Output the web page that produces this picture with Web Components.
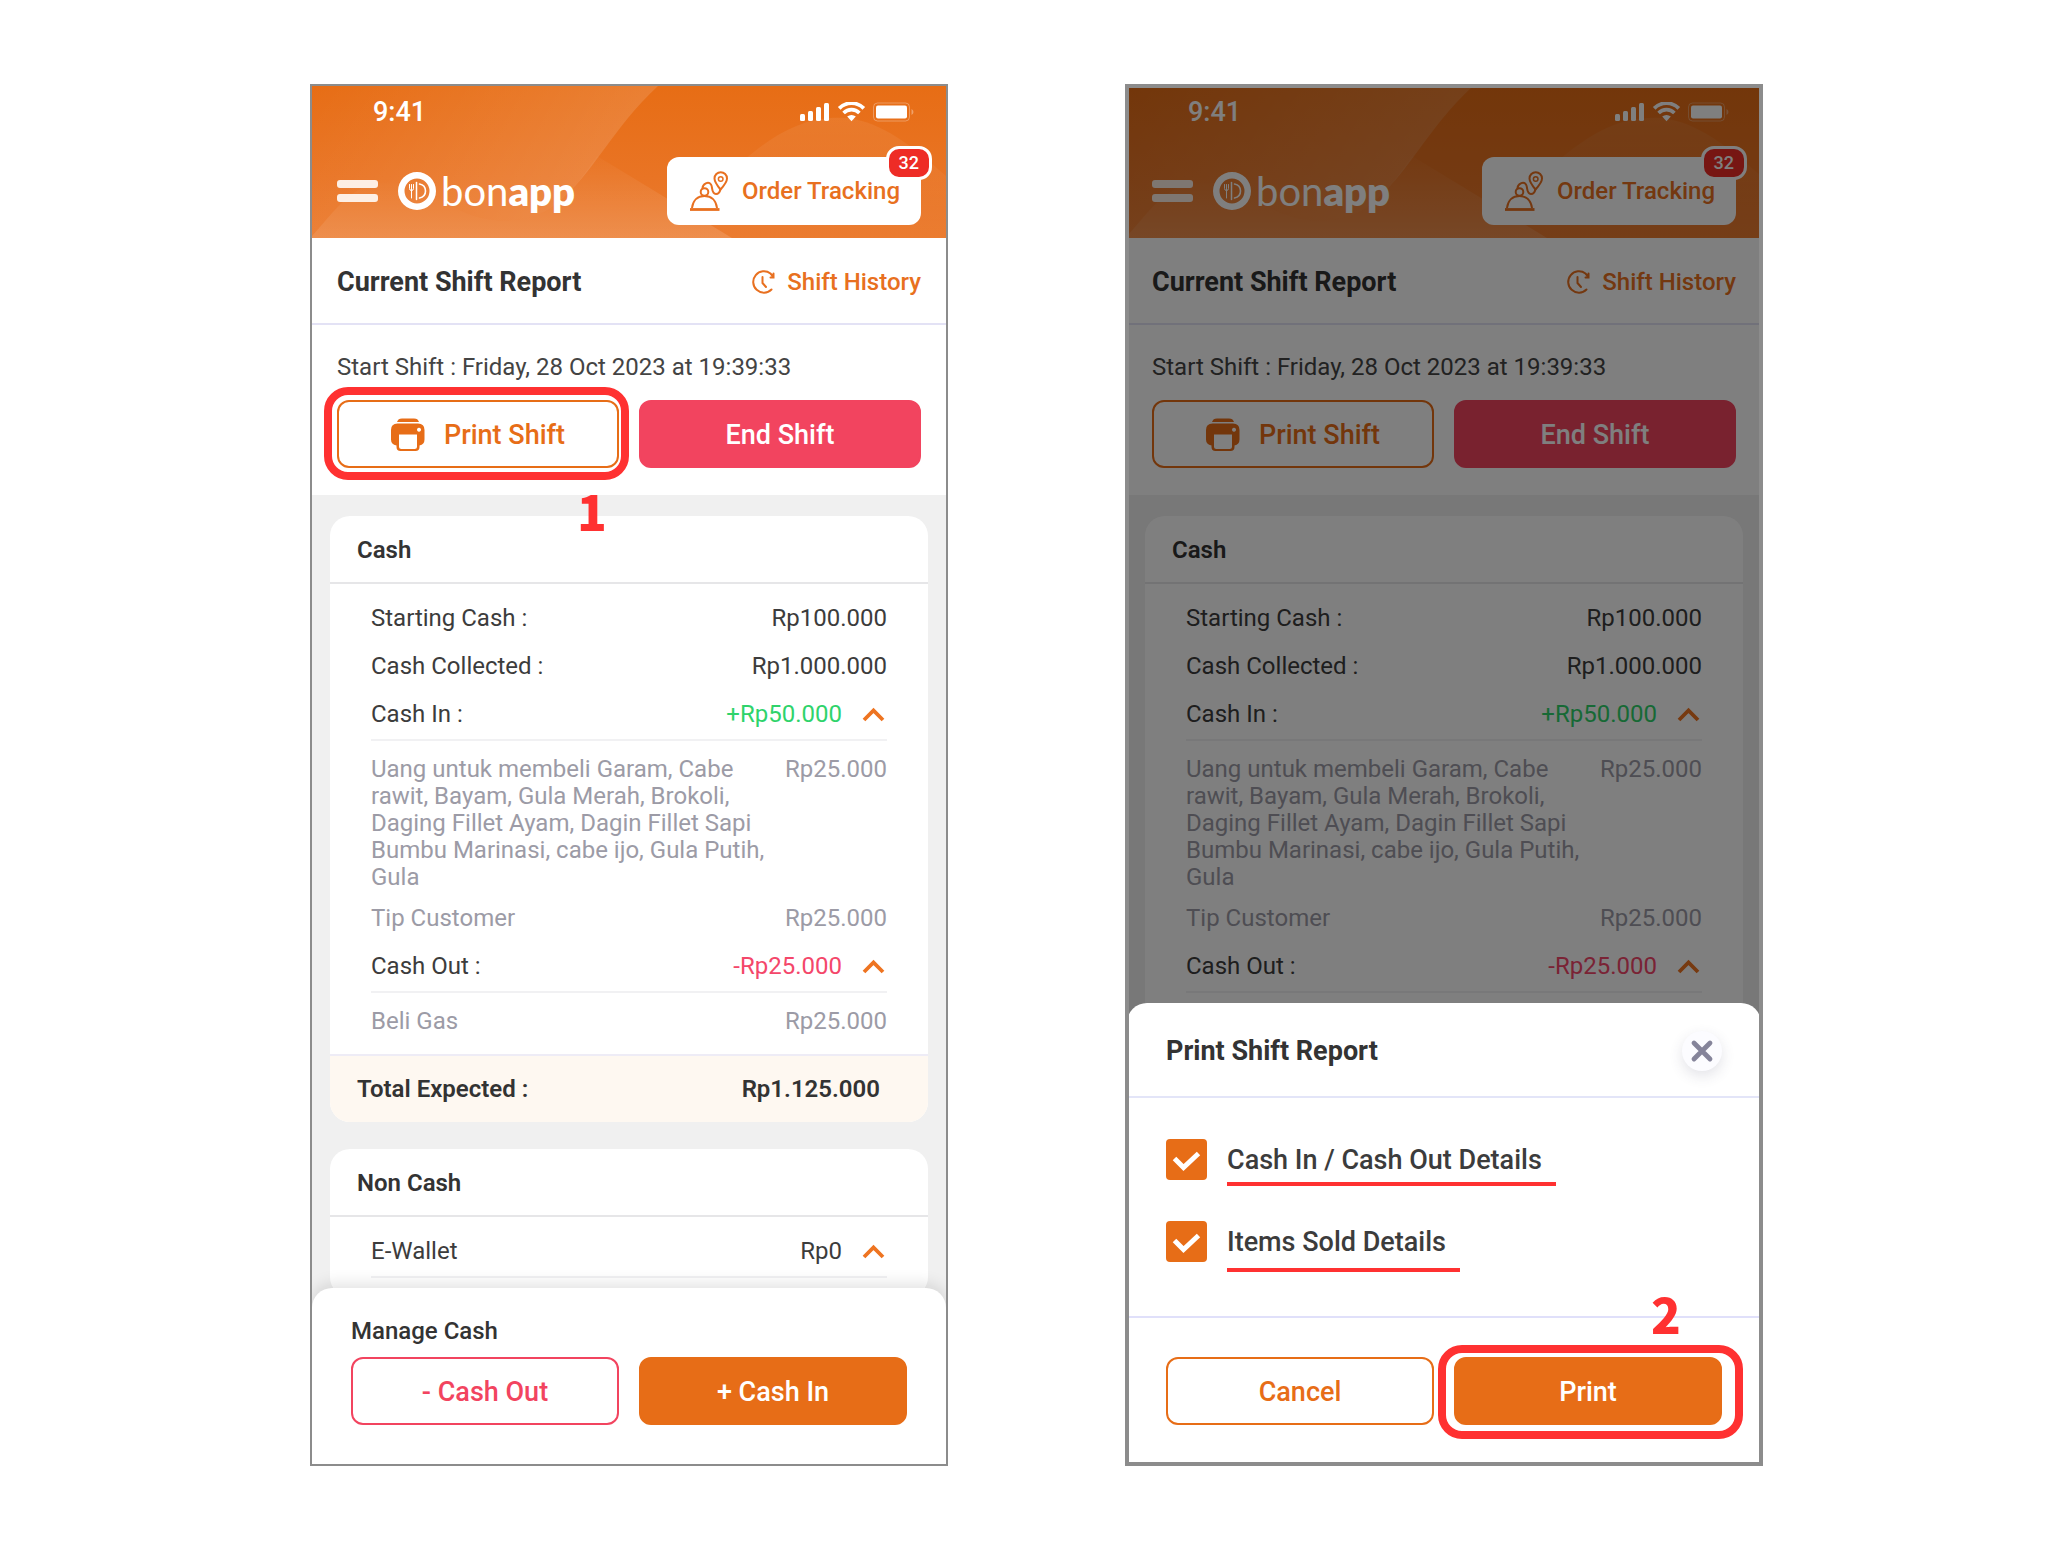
<!DOCTYPE html>
<html lang="en">
<head>
<meta charset="utf-8">
<title>Print Shift Report guide</title>
<style>
  body { margin: 0; background: #fff; font-family: Roboto, "Liberation Sans", sans-serif; color: #333; }
</style>
</head>
<body>
<guide-board>
  <phone-frame>
    <shift-screen highlight></shift-screen>
  </phone-frame>
  <phone-frame heavy>
    <shift-screen covered inert></shift-screen>
    <print-dialog slot="overlay"></print-dialog>
  </phone-frame>
</guide-board>

<script>
const define = (name, html, setup) => {
  const template = document.createElement('template');
  template.innerHTML = `<style>*{box-sizing:border-box}</style>` + html;
  customElements.define(name, class extends HTMLElement {
    constructor() {
      super();
      this.attachShadow({ mode: 'open' }).append(template.content.cloneNode(true));
    }
    connectedCallback() { if (setup) setup(this, this.shadowRoot); }
  });
};

define('guide-board', `
<style>
  :host { display: grid; box-sizing: border-box; min-height: 100vh; padding: 84px 0;
          grid-template-columns: 310fr 638fr 177fr 638fr 285fr; }
  ::slotted(phone-frame:first-child) { grid-column: 2; }
  ::slotted(phone-frame:last-child) { grid-column: 4; }
</style>
<slot></slot>`);

define('phone-frame', `
<style>
  :host { display: grid; box-sizing: border-box; position: relative; border: 2px solid #8c8c8c;
          height: calc(100vh - 168px); min-width: 0; }
  .edge { display: none; position: absolute; inset: 0; border: 2px solid #8c8c8c; pointer-events: none; }
  :host([heavy]) .edge { display: block; }
</style>
<slot></slot><slot name="overlay"></slot><div class="edge"></div>`);

define('status-bar', `
<style>
  :host { display: flex; justify-content: space-between; align-items: center; height: 52px; padding: 0 32px 0 61px; color: #fff; }
  span { font-size: 27px; line-height: 30px; font-weight: 500; }
</style>
<span>9:41</span>
<svg width="115" height="20" viewBox="0 0 115 20" fill="#fff" aria-hidden="true">
  <rect x="1" y="12" width="5" height="7" rx="1.5"/><rect x="9" y="9" width="5" height="10" rx="1.5"/>
  <rect x="17" y="5" width="5" height="14" rx="1.5"/><rect x="25" y="1" width="5" height="18" rx="1.5"/>
  <path d="M40.200 6.300A17.400 17.400 0 0 1 64.800 6.300" fill="none" stroke="#fff" stroke-width="3.800"/>
  <path d="M44.600 11A11 11 0 0 1 60.400 11" fill="none" stroke="#fff" stroke-width="3.600"/>
  <path d="M52.500 19.300l-4.300-4.700a6.400 6.400 0 0 1 8.600 0z"/>
  <rect x="74.500" y="1" width="36" height="18" rx="4" fill="none" stroke="#fff" stroke-opacity=".3"/>
  <rect x="77" y="3.500" width="31" height="13" rx="2"/>
  <path d="M112.500 7v6q2-1 2-3t-2-3z" opacity=".35"/>
</svg>`);

define('bonapp-logo', `
<style>
  :host { display: flex; align-items: center; gap: 5px; color: #fff; font: 400 40px/44px Lato, "Open Sans", sans-serif; }
  b { font-weight: 800; }
  svg { display: block; }
</style>
<svg width="38" height="38" viewBox="0 0 38 38" aria-hidden="true">
  <path fill="#fff" fill-rule="evenodd" d="M19 0a19 19 0 1 1 0 38a19 19 0 1 1 0-38zM19 6.500a12.500 12.500 0 1 0 0 25a12.500 12.500 0 1 0 0-25z"/>
  <g fill="none" stroke="#fff" stroke-width="1" stroke-linecap="round">
    <path d="M11.500 12.500v4q0 2 2 2t2-2v-4M13.500 12.500V26"/>
    <path d="M18.500 27.500V10.500" stroke-width="1.500"/>
    <path d="M21.500 12c4 .8 6 3.800 6 7s-2 6.200-6 7" stroke-width="1.600"/>
  </g>
</svg>
<span>bon<b>app</b></span>`);

define('app-header', `
<style>
  :host { display: block; position: relative; background: linear-gradient(#e76d15, #e97424 60%, #eb7c30); }
  .art { position: absolute; inset: 0; width: 100%; height: 100%; }
  .row { position: relative; display: flex; align-items: center; padding: 19px 25px 13px; gap: 20px; }
  status-bar { position: relative; }
  button { font: inherit; border: 0; background: none; padding: 0; cursor: pointer; }
  .menu { display: grid; gap: 6px; width: 41px; padding: 0; }
  .menu i { height: 8px; border-radius: 3px; background: rgba(255,255,255,.87); }
  .track { position: relative; margin-left: auto; display: flex; align-items: center; gap: 12px; height: 68px;
    padding: 0 21px; border-radius: 12px; background: #fff; color: #e87020; font-size: 24px; line-height: 30px; font-weight: 500; }
  .track svg { display: block; }
  .badge { position: absolute; top: -11px; right: -11px; padding: 0 10px; border: 3px solid #fff; border-radius: 13px;
    background: #ee2c26; color: #fff; font-size: 18px; line-height: 28px; }
</style>
<svg class="art" viewBox="0 0 634 152" preserveAspectRatio="none" aria-hidden="true">
  <defs>
    <linearGradient id="a" x1="0" y1="0" x2="1" y2="0.300"><stop offset="0" stop-color="#fff" stop-opacity="0"/><stop offset="1" stop-color="#fff" stop-opacity=".14"/></linearGradient>
    <linearGradient id="b" x1="0" y1="0" x2="0" y2="1"><stop offset="0" stop-color="#fff" stop-opacity=".07"/><stop offset="1" stop-color="#fff" stop-opacity="0"/></linearGradient>
    <linearGradient id="c" x1="0" y1="0" x2="0" y2="1"><stop offset="0" stop-color="#fff" stop-opacity=".02"/><stop offset="1" stop-color="#fff" stop-opacity=".14"/></linearGradient>
  </defs>
  <path d="M0 0H346C300 42 282 88 244 118C225 135 180 144 140 120C110 98 75 90 50 102C30 112 15 134 0 150Z" fill="url(#a)"/>
  <path d="M0 150C15 134 30 112 50 102C75 90 110 98 140 120C180 144 225 135 244 118C262 104 275 85 285 70L420 152H0Z" fill="url(#c)"/>
  <path d="M425 80C470 40 500 30 535 32C570 36 600 60 634 90V152H400Z" fill="url(#b)"/>
</svg>
<status-bar></status-bar>
<div class="row">
  <button class="menu" aria-label="Menu"><i></i><i></i></button>
  <bonapp-logo></bonapp-logo>
  <button class="track"><svg width="42" height="42" viewBox="0 0 42 42" fill="none" stroke="#e87020" stroke-width="2" aria-hidden="true">
      <path d="M2 39.500h29.500" stroke-width="2.800"/>
      <path d="M4 38C5 30 10 26 16.500 26S28 30 29 38"/>
      <circle cx="16.500" cy="22" r="3.800"/>
      <path d="M14.500 18.500c0-5 6-7.500 8.500-4c2 3 0 9 5 9.500c3 0 4-2.500 4.500-5"/>
      <path d="M32.500 19.500C28 14 26.500 11 26.500 8.500a6 6 0 0 1 12.500 0c0 3-2 6-6.500 11z"/>
      <circle cx="32.700" cy="9" r="2.300" stroke-width="1.500"/>
    </svg><span>Order Tracking</span><span class="badge">32</span></button>
</div>`);

define('title-bar', `
<style>
  :host { display: flex; justify-content: space-between; align-items: center; padding: 28px 25px 25px; background: #fff; border-bottom: 2px solid #e3e2f5; }
  h1 { margin: 0; font-size: 27px; line-height: 32px; font-weight: 700; }
  a { display: flex; align-items: center; gap: 12px; color: #e87020; font-size: 24px; line-height: 32px; font-weight: 500; text-decoration: none; }
</style>
<h1>Current Shift Report</h1>
<a href="#history"><svg width="24" height="26" viewBox="0 0 24 26" fill="none" stroke="#e87020" stroke-width="2" stroke-linecap="round" aria-hidden="true">
  <path d="M20.500 20.500A10.700 10.700 0 1 1 19.500 4.500L22 7.500M22.500 4.500v4h-3"/><path d="M11.500 8v6l3.500 4"/></svg>Shift History</a>`);

define('action-button', `
<style>
  :host { display: grid; flex: 1 1 0; min-width: 0; --tone: #e76d17; }
  :host([tone=red]) { --tone: #f2445f; }
  button { display: flex; align-items: center; justify-content: center; gap: 19px; height: 68px; padding: 2px 16px 0; border: 2px solid var(--tone);
    border-radius: 12px; background: #fff; color: var(--tone); font: 500 27px/32px Roboto, "Liberation Sans", sans-serif; cursor: pointer; }
  :host([solid]) button { background: var(--tone); color: #fff; }
</style>
<button><slot name="icon"></slot><slot></slot></button>`);

define('call-out', `
<style>
  :host { display: grid; flex: 1 1 0; min-width: 0; position: relative; }
  .ring { position: absolute; inset: var(--ring); border: 8px solid #ff3131; border-radius: 24px; pointer-events: none; }
  b { position: absolute; color: #ff3131; font: 900 49px/60px "Noto Sans CJK SC", "Noto Sans", sans-serif; }
  :host([step="1"]) { --ring: -13px -10px -12px -13px; }
  :host([step="2"]) { --ring: -12px -21px -14px -16px; }
  :host([step="1"]) b { top: 80px; left: 240px; }
  :host([step="2"]) b { top: -74px; left: 197px; }
</style>
<slot></slot><div class="ring"></div><b></b>`, (host, root) => {
  root.querySelector('b').textContent = host.getAttribute('step');
});

define('shift-start', `
<style>
  :host { display: grid; gap: 19px; padding: 29px 25px 27px; background: #fff; position: relative; z-index: 2; }
  p { margin: 0; font-size: 24px; line-height: 27px; color: #444; }
  .row { display: flex; gap: 20px; }
</style>
<p>Start Shift : Friday, 28 Oct 2023 at 19:39:33</p>
<div class="row">
  <action-button class="print"><svg slot="icon" width="34" height="34" viewBox="0 0 34 34" fill="#e76d17" aria-hidden="true">
    <path d="M6 4C7 1.500 8 0.500 11 0.500h12c3 0 4 1 5 3.500z"/>
    <path fill-rule="evenodd" d="M7 5.500h20q6.500 0 6.500 6.500v9.500q0 5-5 6v1.500q0 4-4 4h-15q-4 0-4-4v-1.500q-5.500-1-5.500-6V12q0-6.500 6.500-6.500zM8 16.500V28.500q0 2.500 2.500 2.500h13q2.500 0 2.500-2.500V16.500zM28 9.700a2 2 0 1 0 .01 0z"/></svg>Print Shift</action-button>
  <action-button solid tone="red">End Shift</action-button>
</div>`);

define('report-card', `
<style>
  :host { display: block; overflow: hidden; border-radius: 20px; background: #fff; }
  h2 { margin: 0; padding: 21px 27px 18px; border-bottom: 2px solid #e6e6e8; font-size: 24px; line-height: 27px; font-weight: 600; }
  .rows { display: grid; gap: 21px; padding: 21px 41px 19px; }
</style>
<h2></h2><div class="rows"><slot></slot></div><slot name="total"></slot>`, (host, root) => {
  root.querySelector('h2').textContent = host.getAttribute('heading');
});

define('report-row', `
<style>
  :host { display: flex; justify-content: space-between; gap: 19px; font-size: 24px; line-height: 27px; color: #3c3c3c; }
  .label { max-width: 396px; }
  .amount { margin-left: auto; color: var(--amount, inherit); }
  button { display: none; align-items: center; width: 26px; padding: 0; border: 0; background: none; cursor: pointer; }
  :host([open]) { padding-bottom: 11px; border-bottom: 2px solid #f1f1f3; }
  :host([open]) button { display: flex; }
  :host([tone=in]) { --amount: #2fd36b; }
  :host([tone=out]) { --amount: #f4476a; }
  :host([detail]) { color: #9c9ba6; margin-top: -7px; }
  :host([first]) { margin-top: -6px; }
</style>
<div class="label"><slot></slot></div><div class="amount"></div>
<button aria-label="Toggle details"><svg width="26" height="16" viewBox="0 0 26 16" fill="none" stroke="#ee7421" stroke-width="3.800" aria-hidden="true"><path d="M3 13l9.500-9.500L22 13"/></svg></button>`, (host, root) => {
  root.querySelector('.amount').textContent = host.getAttribute('amount');
});

define('report-total', `
<style>
  :host { display: flex; justify-content: space-between; padding: 20px 48px 19px 27px; border-top: 2px solid #eeecf6; background: #fef8f1;
    font-size: 24px; line-height: 27px; font-weight: 600; }
</style>
<span><slot></slot></span><span><slot name="amount"></slot></span>`);

define('manage-cash', `
<style>
  :host { display: grid; gap: 12px; margin-top: -20px; padding: 30px 39px 39px; border-radius: 20px 20px 0 0; background: #fff;
    box-shadow: 0 -4px 16px rgba(0,0,0,.12); position: relative; }
  h2 { margin: 0; font-size: 24px; line-height: 27px; font-weight: 500; }
  .row { display: flex; gap: 20px; }
</style>
<h2>Manage Cash</h2>
<div class="row"><action-button tone="red">- Cash Out</action-button><action-button solid>+ Cash In</action-button></div>`);

define('shift-screen', `
<style>
  :host { display: flex; flex-direction: column; min-height: 0; overflow: hidden; background: #f0f0f0; isolation: isolate; }
  .list { flex: 1 1 0; min-height: 0; overflow: hidden; display: flex; flex-direction: column; gap: 27px; padding: 21px 18px 0; }
  .list > * { flex: none; }
  :host([covered]) .below { visibility: hidden; }
</style>
<app-header></app-header>
<title-bar></title-bar>
<shift-start></shift-start>
<div class="list">
  <report-card heading="Cash">
    <report-row amount="Rp100.000">Starting Cash :</report-row>
    <report-row amount="Rp1.000.000">Cash Collected :</report-row>
    <report-row open tone="in" amount="+Rp50.000">Cash In :</report-row>
    <report-row detail first amount="Rp25.000">Uang untuk membeli Garam, Cabe rawit, Bayam, Gula Merah, Brokoli, Daging Fillet Ayam, Dagin Fillet Sapi Bumbu Marinasi, cabe ijo, Gula Putih, Gula</report-row>
    <report-row detail amount="Rp25.000">Tip Customer</report-row>
    <report-row open tone="out" amount="-Rp25.000">Cash Out :</report-row>
    <report-row class="below" detail first amount="Rp25.000">Beli Gas</report-row>
    <report-total class="below" slot="total">Total Expected :<span slot="amount">Rp1.125.000</span></report-total>
  </report-card>
  <report-card class="below" heading="Non Cash">
    <report-row open amount="Rp0">E-Wallet</report-row>
  </report-card>
</div>
<manage-cash class="below"></manage-cash>`, (host, root) => {
  if (!host.hasAttribute('highlight')) return;
  const start = root.querySelector('shift-start').shadowRoot;
  const print = start.querySelector('.print');
  const callout = document.createElement('call-out');
  callout.setAttribute('step', '1');
  print.replaceWith(callout);
  callout.append(print);
});

define('check-option', `
<style>
  :host { display: block; }
  label { display: flex; align-items: center; gap: 20px; font-size: 27px; line-height: 32px; font-weight: 500; color: #3c3c3c; }
  .box { display: grid; width: 41px; height: 41px; }
  .box > * { grid-area: 1 / 1; }
  input { appearance: none; margin: 0; border-radius: 4px; background: #e76d17; }
  svg { pointer-events: none; }
  .text { position: relative; padding-right: 14px; }
  .text::after { content: ""; position: absolute; left: 0; right: 0; bottom: var(--drop, -10px); height: 4px; background: #ff3131; }
</style>
<label><span class="box"><input type="checkbox" checked><svg width="41" height="41" viewBox="0 0 41 41" fill="none" stroke="#fff" stroke-width="5" aria-hidden="true"><path d="M8.500 19.500l9 9L32.500 14.500"/></svg></span><span class="text"><slot></slot></span></label>`);

define('print-dialog', `
<style>
  :host { position: absolute; inset: 0; display: flex; flex-direction: column; justify-content: flex-end; background: rgba(0,0,0,.5); }
  section { border-radius: 20px 20px 0 0; background: #fff; }
  header { display: flex; justify-content: space-between; align-items: center; padding: 28px 39px 25px; border-bottom: 2px solid #e3e5f8; }
  h2 { margin: 0; font-size: 27px; line-height: 40px; font-weight: 700; }
  .close { display: grid; place-items: center; width: 40px; height: 40px; padding: 0; border: 0; border-radius: 50%; background: #fcfcff;
    box-shadow: 0 5px 14px rgba(60,60,90,.14); cursor: pointer; }
  .options { display: grid; gap: 41px; padding: 41px 39px 54px; }
  .late { --drop: -14px; }
  footer { display: flex; gap: 20px; padding: 39px; border-top: 2px solid #e0e0fa; }
</style>
<section role="dialog" aria-labelledby="t">
  <header><h2 id="t">Print Shift Report</h2>
    <button class="close" aria-label="Close"><svg width="24" height="24" viewBox="0 0 24 24" fill="none" stroke="#85849a" stroke-width="4.800" stroke-linecap="round" aria-hidden="true"><path d="M4 4l16 16M20 4L4 20"/></svg></button></header>
  <div class="options">
    <check-option>Cash In / Cash Out Details</check-option>
    <check-option class="late">Items Sold Details</check-option>
  </div>
  <footer><action-button>Cancel</action-button><call-out step="2"><action-button solid>Print</action-button></call-out></footer>
</section>`);
</script>
</body>
</html>
